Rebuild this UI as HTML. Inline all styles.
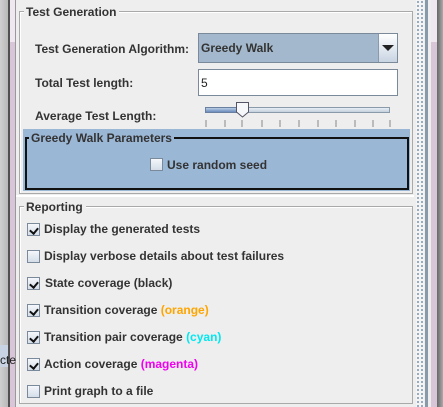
<!DOCTYPE html>
<html><head><style>
*{margin:0;padding:0;box-sizing:border-box}
body{width:443px;height:407px;overflow:hidden;background:#eeeeee;position:relative;font-family:"Liberation Sans",sans-serif;font-weight:bold;font-size:12px;color:#333}
.a{position:absolute}
.t{position:absolute;white-space:nowrap;line-height:14px}
.fs{position:absolute;border:1px solid #a9a9a9;box-shadow:inset 1px 1px 0 #fff}
.lg{position:absolute;background:#eee;padding:0 3px 0 2px;line-height:14px}
.cb{position:absolute;width:13px;height:13px;border:1px solid #7a8a9a;background:linear-gradient(#f4f7fb,#d4dde8)}
.cb.k::after{content:"";position:absolute;left:3px;top:2px;width:4px;height:6px;border-right:2px solid #111;border-bottom:2px solid #111;transform:rotate(40deg)}
</style></head><body>
<div class="a" style="left:0;top:0;width:8px;height:407px;background:linear-gradient(90deg,#d0d0d0,#b8b8b8)"></div>
<div class="a" style="left:8px;top:0;width:2px;height:407px;background:#505050"></div>
<div class="a" style="left:10px;top:0;width:5px;height:42px;background:#efe8f0"></div>
<div class="a" style="left:10px;top:42px;width:5px;height:365px;background:#d8c6d8"></div>
<div class="a" style="left:15px;top:0;width:1px;height:407px;background:#999"></div>
<div class="a" style="left:0;top:345px;width:8px;height:22px;background:#c8d4e4"></div>
<div class="t" style="left:0;top:353px;font-weight:normal;color:#222">cte</div>
<div class="a" style="left:416px;top:0;width:8px;height:407px;background-image:radial-gradient(#7a93b0 0.8px,transparent 1px);background-size:4px 4px;background-color:#f4f4f4"></div>
<div class="a" style="left:425px;top:0;width:3px;height:407px;background:#8899aa"></div>
<div class="a" style="left:428px;top:0;width:3px;height:407px;background:#eee"></div>
<div class="a" style="left:431px;top:0;width:6px;height:42px;background:#efe8f0"></div>
<div class="a" style="left:431px;top:42px;width:6px;height:365px;background:#d8c6d8"></div>
<div class="a" style="left:437px;top:0;width:6px;height:407px;background:linear-gradient(90deg,#666,#aaa)"></div>

<div class="fs" style="left:19px;top:11px;width:394px;height:183px"></div>
<div class="lg" style="left:24px;top:5px">Test Generation</div>
<div class="t" style="left:35px;top:42px">Test Generation Algorithm:</div>
<div class="a" style="left:198px;top:33px;width:200px;height:30px;border:1px solid #7a8a9a;background:#a3b8cc"></div>
<div class="a" style="left:378px;top:34px;width:19px;height:28px;border-left:1px solid #8a9aaa;background:linear-gradient(#fff,#c8d4e2)"></div>
<div class="a" style="left:382px;top:45px;width:0;height:0;border-left:6px solid transparent;border-right:6px solid transparent;border-top:6px solid #222"></div>
<div class="t" style="left:201px;top:41px">Greedy Walk</div>
<div class="t" style="left:35px;top:76px">Total Test length:</div>
<div class="a" style="left:198px;top:69px;width:200px;height:27px;border:1px solid #7a8a9a;background:#fff"></div>
<div class="t" style="left:201px;top:76px;font-weight:normal;color:#222">5</div>
<div class="t" style="left:35px;top:109px">Average Test Length:</div>
<div class="a" style="left:205px;top:107px;width:185px;height:6px;border:1px solid #8a9aaa;background:linear-gradient(#e8eef4,#c4d0dc)"></div>
<div class="a" style="left:205px;top:107px;width:32px;height:6px;border:1px solid #6a80a0;background:linear-gradient(#b8cce4,#6c8cbc)"></div>
<svg class="a" style="left:235px;top:102px" width="16" height="16"><path d="M1.5 .5H13.5V10L7.5 15 1.5 10Z" fill="#f6f8fa" stroke="#556" /></svg>
<svg class="a" style="left:200px;top:118px" width="200" height="12"><g stroke="#888"><path d="M6 2v7M25 2v7M42 2v7M62 2v7M80 2v7M99 2v7M118 2v7M136 2v7M155 2v7M173 2v7M190 2v7"/></g></svg>
<div class="a" style="left:23px;top:129px;width:387px;height:62px;background:#9bb7d6"></div>
<div class="a" style="left:25px;top:137px;width:384px;height:53px;border:2px solid #111"></div>
<div class="t" style="left:29px;top:131px;background:#9bb7d6;padding:0 2px">Greedy Walk Parameters</div>
<div class="cb" style="left:150px;top:158px"></div>
<div class="t" style="left:167px;top:158px">Use random seed</div>

<div class="a" style="left:16px;top:195px;width:398px;height:2px;background:#fff"></div>
<div class="fs" style="left:19px;top:206px;width:394px;height:198px"></div>
<div class="lg" style="left:24px;top:200px">Reporting</div>
<div class="cb k" style="left:27px;top:223px"></div><div class="t" style="left:44px;top:222px">Display the generated tests</div>
<div class="cb" style="left:27px;top:250px"></div><div class="t" style="left:44px;top:249px">Display verbose details about test failures</div>
<div class="cb k" style="left:27px;top:277px"></div><div class="t" style="left:45px;top:276px">State coverage (black)</div>
<div class="cb k" style="left:27px;top:304px"></div><div class="t" style="left:44px;top:303px">Transition coverage <span style="color:#ffa500">(orange)</span></div>
<div class="cb k" style="left:27px;top:331px"></div><div class="t" style="left:44px;top:330px">Transition pair coverage <span style="color:#00e8f0">(cyan)</span></div>
<div class="cb k" style="left:27px;top:358px"></div><div class="t" style="left:44px;top:357px">Action coverage <span style="color:#f000f0">(magenta)</span></div>
<div class="cb" style="left:27px;top:385px"></div><div class="t" style="left:44px;top:384px">Print graph to a file</div>
</body></html>
